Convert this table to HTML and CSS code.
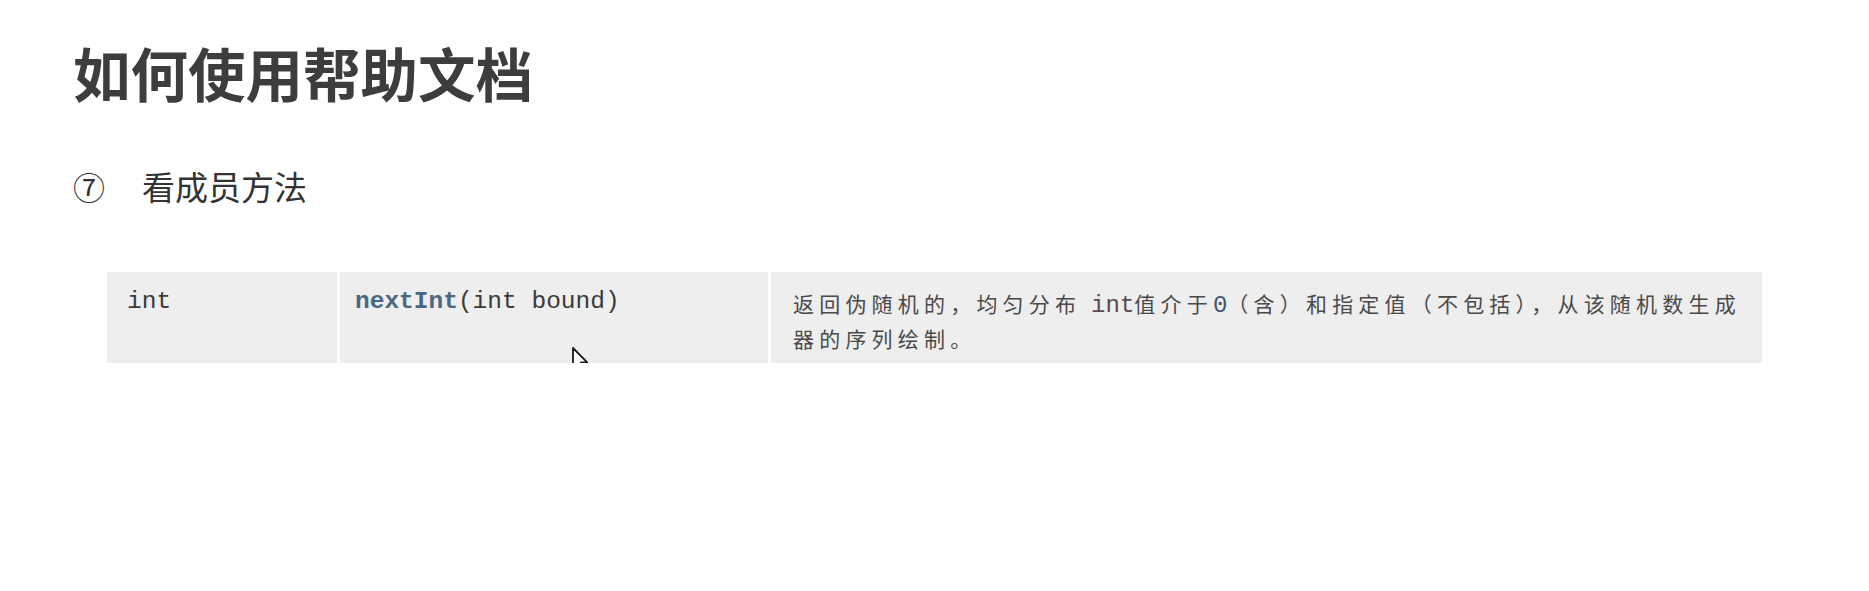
FILE: index.html
```html
<!DOCTYPE html>
<html lang="zh-CN">
<head>
    <meta charset="UTF-8">
    <title>如何使用帮助文档</title>
    <link rel="stylesheet" href="styles.css">
</head>
<body>
    <div class="page">
        <h1>如何使用帮助文档</h1>

        <div class="step">
            <span class="step-num">⑦</span>
            <span>看成员方法</span>
        </div>

        <div class="member-table">
            <div class="cell type"><code>int</code></div>
            <div class="cell method"><code><b>nextInt</b>(int bound)</code></div>
            <div class="cell desc">返回伪随机的，均匀分布 <code>int</code>值介于<code class="num">0</code>（含）和指定值（不包括），从该随机数生成器的序列绘制。</div>
        </div>

        <!-- screen recording pointer -->
        <svg class="cursor" width="20" height="30" viewBox="0 0 20 30">
            <path d="M2 2 L2 22 L6.6 17.6 L10.2 25.8 L13.4 24.4 L10 16.4 L16.2 16.4 Z" fill="#fff" stroke="#1a1a1a" stroke-width="1.8" stroke-linejoin="round"/>
        </svg>
    </div>
</body>
</html>
```

FILE: styles.css
```css
body {
    margin: 0;
    background: #fff;
    font-family: "Noto Sans CJK SC", "Noto Sans", sans-serif;
}
.page {
    position: relative;
    padding: 44px 0 0 73px;
}
h1 {
    margin: 0;
    font-size: 57.5px;
    line-height: 1;
    font-weight: 700;
    color: #3d3d3d;
}
.step {
    display: flex;
    align-items: center;
    gap: 37px;
    margin-top: 68px;
    font-size: 33px;
    line-height: 1;
    color: #333;
}
.step-num {
    font-size: 32px;
}
.member-table {
    display: grid;
    grid-template-columns: 230px 428px 991px;
    column-gap: 3px;
    margin: 69px 0 0 34px;
}
.cell {
    background: #eeeeee;
    padding: 13px 6px 8px 20px;
    min-height: 68px;
}
code {
    font-family: "Liberation Mono", "Courier New", monospace;
    font-size: 24.5px;
    line-height: 33px;
    color: #3a3a38;
    letter-spacing: 0;
}
.method {
    padding-left: 15px;
}
.method b {
    color: #4a6782;
}
.desc {
    padding-top: 15px;
    padding-left: 22px;
    font-size: 21px;
    line-height: 33px;
    letter-spacing: 5.2px;
    color: #4a4a4a;
}
.desc code {
    font-size: 24px;
    color: #5a4a52;
}
.desc .num {
    color: #3f5870;
}
.cursor {
    position: absolute;
    left: 571px;
    top: 346px;
    z-index: 2;
}
```
